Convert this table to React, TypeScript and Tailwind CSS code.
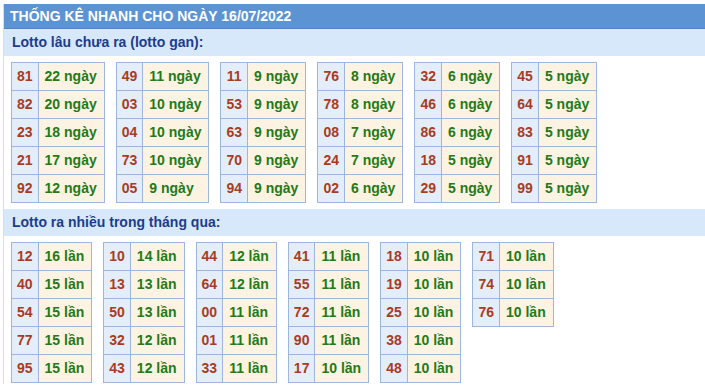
import React from "react";

type Row = [string, string];

const ganTables: Row[][] = [
  [["81", "22"], ["82", "20"], ["23", "18"], ["21", "17"], ["92", "12"]],
  [["49", "11"], ["03", "10"], ["04", "10"], ["73", "10"], ["05", "9"]],
  [["11", "9"], ["53", "9"], ["63", "9"], ["70", "9"], ["94", "9"]],
  [["76", "8"], ["78", "8"], ["08", "7"], ["24", "7"], ["02", "6"]],
  [["32", "6"], ["46", "6"], ["86", "6"], ["18", "5"], ["29", "5"]],
  [["45", "5"], ["64", "5"], ["83", "5"], ["91", "5"], ["99", "5"]],
];

const nhieuTables: Row[][] = [
  [["12", "16"], ["40", "15"], ["54", "15"], ["77", "15"], ["95", "15"]],
  [["10", "14"], ["13", "13"], ["50", "13"], ["32", "12"], ["43", "12"]],
  [["44", "12"], ["64", "12"], ["00", "11"], ["01", "11"], ["33", "11"]],
  [["41", "11"], ["55", "11"], ["72", "11"], ["90", "11"], ["17", "10"]],
  [["18", "10"], ["19", "10"], ["25", "10"], ["38", "10"], ["48", "10"]],
  [["71", "10"], ["74", "10"], ["76", "10"]],
];

function StatTable({ rows, unit }: { rows: Row[]; unit: string }) {
  return (
    <table className="border-collapse self-start">
      <tbody>
        {rows.map(([num, count]) => (
          <tr key={num} className="h-[28px]">
            <td className="border border-[#9db6e0] bg-[#e3eefa] px-[5px] text-center text-[#a83c1f]">
              {num}
            </td>
            <td className="border border-[#9db6e0] bg-[#fdf3e2] pl-[6px] pr-[7px] text-[#237a17]">
              {count} {unit}
            </td>
          </tr>
        ))}
      </tbody>
    </table>
  );
}

function SectionTitle({ children }: { children: React.ReactNode }) {
  return (
    <div className="flex h-[27px] items-center bg-[#d6e8fa] pl-[8px] text-[14px] font-bold text-[#1d3c8c]">
      {children}
    </div>
  );
}

export default function App() {
  return (
    <div className="h-[388px] w-[705px] overflow-hidden bg-white pt-[4px] font-['Liberation_Sans',Arial,sans-serif]">
      <div className="ml-[3px] h-[380px] border-l border-[#dcdcdc]">
        <div className="flex h-[25px] items-center border-b border-[#4f85c4] bg-[#5b93d3] pl-[6px] text-[14px] font-bold text-white">
          THỐNG KÊ NHANH CHO NGÀY 16/07/2022
        </div>

        <SectionTitle>Lotto lâu chưa ra (lotto gan):</SectionTitle>
        <div className="flex gap-[11px] py-[6px] pl-[7px] text-[14px] font-bold">
          {ganTables.map((rows, i) => (
            <StatTable key={i} rows={rows} unit="ngày" />
          ))}
        </div>

        <SectionTitle>Lotto ra nhiều trong tháng qua:</SectionTitle>
        <div className="flex gap-[11px] pt-[6px] pl-[7px] text-[14px] font-bold">
          {nhieuTables.map((rows, i) => (
            <StatTable key={i} rows={rows} unit="lần" />
          ))}
        </div>
      </div>
    </div>
  );
}
